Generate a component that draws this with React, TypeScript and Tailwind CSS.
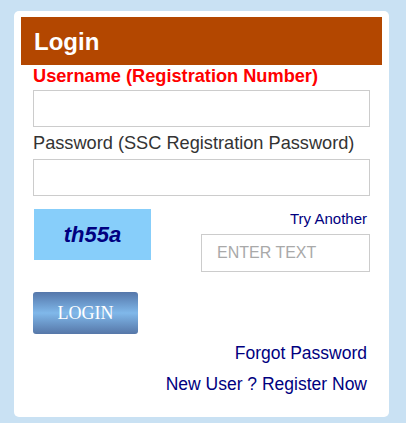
export default function App() {
  return (
    <div
      className="w-[406px] h-[423px] bg-[#c9e1f3] pt-[11px] pl-[14px]"
      style={{ fontFamily: '"Liberation Sans", Arial, sans-serif' }}
    >
      <div className="w-[375px] h-[406px] bg-white rounded-[5px] pt-[6px] px-[7px]">
        <div className="h-[48px] bg-[#b34700] flex items-center pl-[13px] pt-[2px] text-white font-bold text-[24px] leading-none">
          Login
        </div>
        <div className="px-[12px]">
          <div className="mt-[1px] text-[18.2px] leading-[20px] font-bold text-[#ff0000]">
            Username (Registration Number)
          </div>
          <input
            type="text"
            className="mt-[4px] block w-full h-[37px] border border-[#ccc] outline-none px-3"
          />
          <div className="mt-[6px] text-[18.2px] leading-[20px] text-[#333]">
            Password (SSC Registration Password)
          </div>
          <input
            type="password"
            className="mt-[6px] block w-full h-[37px] border border-[#ccc] outline-none px-3"
          />
          <div className="mt-[13px] flex justify-between items-start">
            <div className="ml-[1px] w-[117px] h-[51px] bg-[#87cefa] flex items-center justify-center">
              <span className="text-[22px] font-bold italic text-[#000080] leading-none">th55a</span>
            </div>
            <div className="flex flex-col items-end pt-[1px]">
              <a className="mr-[3px] text-[15px] leading-[17px] text-[#000080] cursor-pointer">
                Try Another
              </a>
              <input
                type="text"
                placeholder="ENTER TEXT"
                className="mt-[7px] block w-[169px] h-[38px] border border-[#ccc] outline-none pl-[15px] text-[16px] placeholder:text-[#a9a9a9]"
              />
            </div>
          </div>
          <button
            className="mt-[20px] w-[105px] h-[42px] rounded-[3px] bg-linear-to-b from-[#5577aa] via-[#80b8ea] to-[#5677a8] text-white text-[18px]"
            style={{ fontFamily: '"Liberation Serif", "Times New Roman", serif' }}
          >
            LOGIN
          </button>
          <div className="mt-[9px] flex flex-col items-end pr-[3px] text-[17.5px] leading-[20px] text-[#000080]">
            <a className="cursor-pointer">Forgot Password</a>
            <a className="mt-[11px] cursor-pointer">New User ? Register Now</a>
          </div>
        </div>
      </div>
    </div>
  );
}
